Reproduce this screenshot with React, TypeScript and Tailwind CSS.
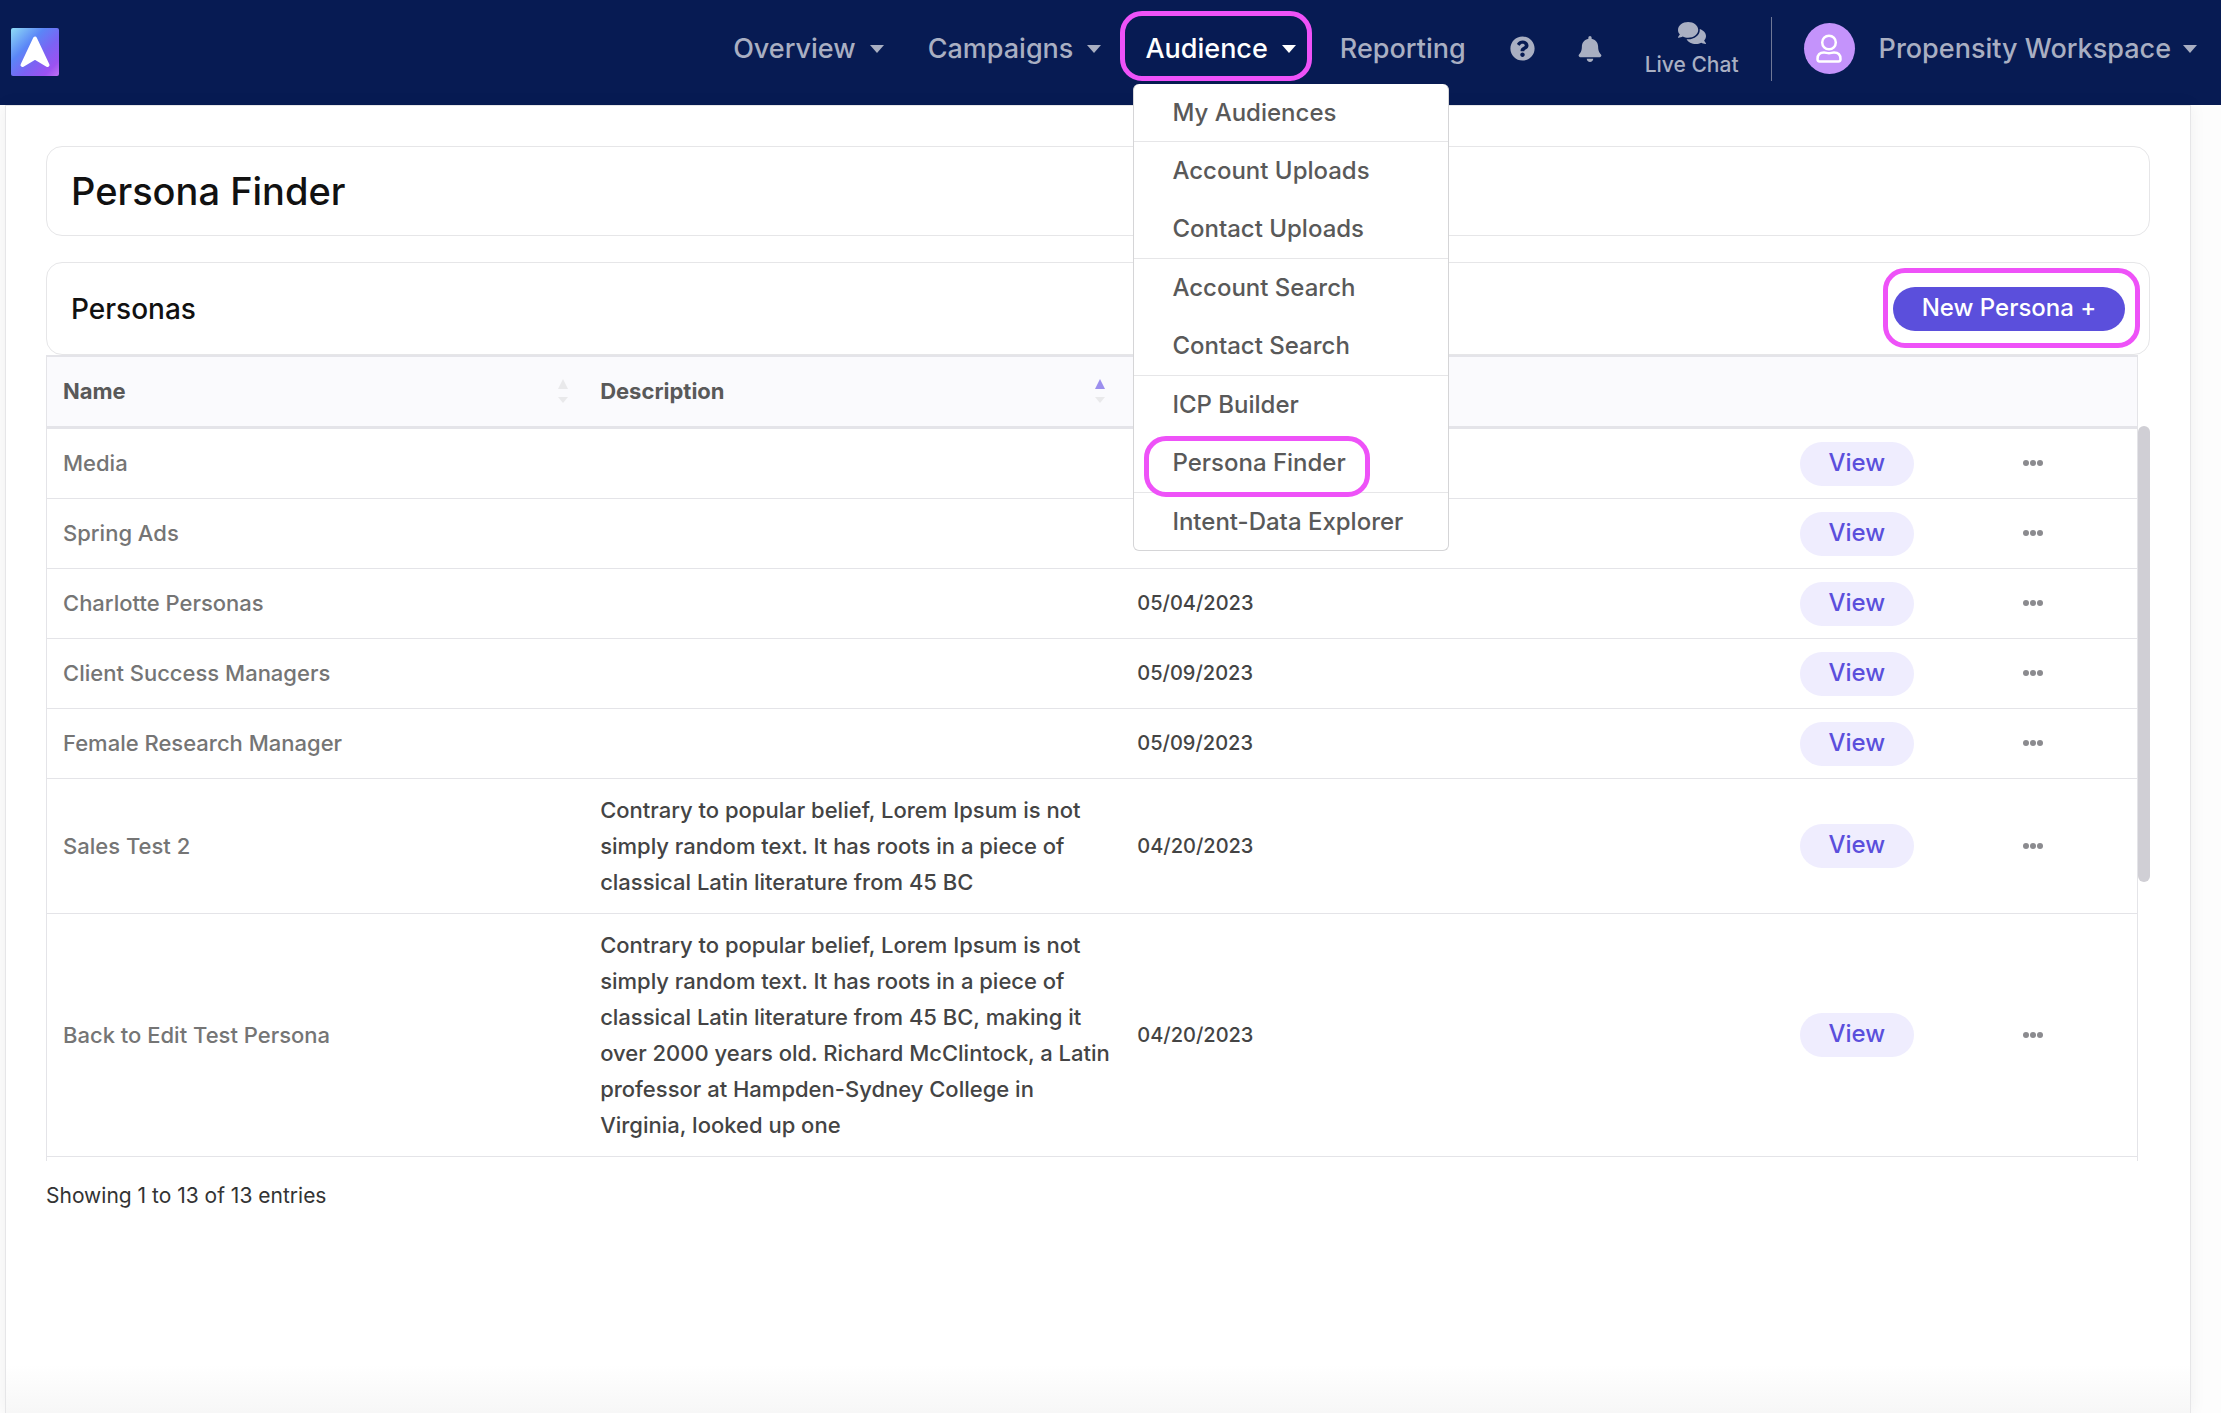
import React from 'react';
import { FaBell, FaComments, FaQuestionCircle } from 'react-icons/fa';

const menuGroups = [
  ['My Audiences'],
  ['Account Uploads', 'Contact Uploads'],
  ['Account Search', 'Contact Search'],
  ['ICP Builder', 'Persona Finder'],
  ['Intent-Data Explorer'],
];

const personas = [
  { name: 'Media', description: '', date: '' },
  { name: 'Spring Ads', description: '', date: '' },
  { name: 'Charlotte Personas', description: '', date: '05/04/2023' },
  { name: 'Client Success Managers', description: '', date: '05/09/2023' },
  { name: 'Female Research Manager', description: '', date: '05/09/2023' },
  {
    name: 'Sales Test 2',
    description:
      'Contrary to popular belief, Lorem Ipsum is not simply random text. It has roots in a piece of classical Latin literature from 45 BC',
    date: '04/20/2023',
  },
  {
    name: 'Back to Edit Test Persona',
    description:
      'Contrary to popular belief, Lorem Ipsum is not simply random text. It has roots in a piece of classical Latin literature from 45 BC, making it over 2000 years old. Richard McClintock, a Latin professor at Hampden-Sydney College in Virginia, looked up one',
    date: '04/20/2023',
  },
];

const Logo = () => (
  <svg width="48" height="48" viewBox="0 0 48 48" aria-hidden="true">
    <defs>
      <linearGradient id="logo" x1="0" y1="0" x2="1" y2="1">
        <stop offset="0" stopColor="#8fdcf5" />
        <stop offset="0.35" stopColor="#5b86f7" />
        <stop offset="0.6" stopColor="#7b63f3" />
        <stop offset="0.84" stopColor="#9c52f2" />
        <stop offset="1" stopColor="#c072f3" />
      </linearGradient>
    </defs>
    <rect width="48" height="48" rx="2" fill="url(#logo)" />
    <path d="M24 10.5 11.5 37 24 29.5 36.500 37Z" fill="#fff" stroke="#fff" strokeWidth="4" strokeLinejoin="round" />
  </svg>
);

const Caret = () => (
  <svg width="14" height="8" viewBox="0 0 14 8" fill="currentColor" aria-hidden="true">
    <path d="M0 0h14L7 8Z" />
  </svg>
);

const SortArrows = ({ active }: { active?: boolean }) => (
  <svg width="10" height="24" viewBox="0 0 10 24" aria-hidden="true">
    <path d="M5 0 10 10H0Z" fill={active ? '#9c8fee' : '#e9e9eb'} />
    <path d="M0 18h10L5 24Z" fill="#e9e9eb" />
  </svg>
);

// Pink outline drawn around the step the user should click
const Highlight = ({ className }: { className: string }) => (
  <span className={`pointer-events-none absolute z-20 rounded-[22px] border-[5px] border-[#ee52f8] ${className}`} />
);

const AudienceMenu = () => (
  <div className="absolute top-[84px] -left-3 z-10 w-[316px] rounded-md border border-t-0 border-[#d5d5d7] bg-white">
    {menuGroups.map((group, i) => (
      <ul key={i} className="border-b border-[#e6e6e8] last:border-b-0">
        {group.map((item) => (
          <li key={item} className={group.length === 1 ? 'h-[57px]' : 'h-[58px]'}>
            <a href="#" className="flex h-full items-center pl-[38px] text-2xl font-medium whitespace-nowrap text-[#595959]">
              <span className="relative">
                {item}
                {item === 'Persona Finder' && <Highlight className="-top-[11px] -right-[24px] -bottom-[18px] -left-[28px]" />}
              </span>
            </a>
          </li>
        ))}
      </ul>
    ))}
  </div>
);

const Header = () => (
  <header className="flex h-[105px] items-center bg-[#071b53] pr-6 pl-[11px] text-[27px] leading-10 font-medium text-[#a9afc2]">
    <a href="#" aria-label="Home" className="pb-0.5"><Logo /></a>
    <nav className="ml-auto flex h-full gap-11">
      <button className="flex items-center gap-3.5 pb-2">Overview <Caret /></button>
      <button className="flex items-center gap-3.5 pb-2">Campaigns <Caret /></button>
      <div className="relative flex items-center pb-2 text-white">
        <button className="relative flex items-center gap-3.5">
          Audience <Caret />
          <Highlight className="-top-[18px] -right-[16px] -bottom-[12px] -left-[25px]" />
        </button>
        <AudienceMenu />
      </div>
      <a href="#" className="flex items-center pb-2">Reporting</a>
    </nav>
    <div className="ml-11 flex items-center pb-2">
      <button aria-label="Help" className="mr-[42px]"><FaQuestionCircle size={25} /></button>
      <button aria-label="Notifications" className="mr-[42px]"><FaBell size={26} /></button>
      <button className="flex flex-col items-center gap-1 text-[21px] leading-7">
        <FaComments size={28} />
        Live Chat
      </button>
      <div className="mx-8 h-16 w-px bg-[#6f7896]" />
      <button className="flex items-center">
        <span className="mr-6 flex size-[51px] items-center justify-center rounded-full bg-[#c493fb]">
          <svg width="26" height="29" viewBox="0 0 26 29" fill="none" stroke="#fff" strokeWidth="2.500" aria-hidden="true">
            <circle cx="13" cy="8.500" r="6.800" />
            <path
              d="M8 18.500c2 0 3 .8 5 .8s3-.8 5-.8c4.500 0 6.500 2.800 6.500 6.500 0 1.500-.8 2.500-2 2.500h-19c-1.200 0-2-1-2-2.500 0-3.700 2-6.500 6.500-6.500Z"
              strokeLinejoin="round"
            />
          </svg>
        </span>
        <span className="mr-3">Propensity Workspace</span>
        <Caret />
      </button>
    </div>
  </header>
);

const PersonaTable = () => (
  <div className="flex">
    <div className="min-w-0 flex-1 border-x border-[#e4e4e8] pb-1">
      <table className="w-full table-fixed border-collapse text-left text-[22px] leading-9 font-medium text-[#444]">
        <thead className="border-t-2 border-b-[3px] border-[#e4e4e9] bg-[#fafafd] font-bold text-[#595959]">
          <tr className="h-[71px]">
            <th className="w-[25.7%] px-4">
              <span className="flex items-center justify-between">Name <SortArrows /></span>
            </th>
            <th className="w-[25.7%] px-4">
              <span className="flex items-center justify-between">Description <SortArrows active /></span>
            </th>
            <th className="w-[31.7%] px-4" />
            <th className="w-[10.7%] px-4" />
            <th className="px-4" />
          </tr>
        </thead>
        <tbody>
          {personas.map((p) => (
            <tr key={p.name} className="border-b border-[#e4e4e8]">
              <td className="px-4 text-[#757575]">{p.name}</td>
              <td className="py-[13px] pr-2 pl-4">{p.description}</td>
              <td className="px-4 text-xl">{p.date}</td>
              <td className="px-4 pt-[13px] pb-3">
                <button className="block h-11 w-[114px] rounded-full bg-[#efedfe] pb-0.5 text-2xl text-[#5b4fdc]">View</button>
              </td>
              <td className="px-4">
                <button aria-label="More actions" className="block">
                  <svg width="20" height="6" viewBox="0 0 20 6" fill="#8b8b8f">
                    <circle cx="3" cy="3" r="3" />
                    <circle cx="10" cy="3" r="3" />
                    <circle cx="17" cy="3" r="3" />
                  </svg>
                </button>
              </td>
            </tr>
          ))}
        </tbody>
      </table>
    </div>
    <div className="w-3 pt-[71px]">
      <div className="h-[456px] rounded-full bg-[#d0cfd5]" />
    </div>
  </div>
);

export default function App() {
  return (
    <div className="flex min-h-screen flex-col bg-[#fdfdfd] font-['Inter',sans-serif]">
      <Header />
      <main className="mr-[30px] ml-[5px] flex flex-1 flex-col border border-b-0 border-[#e6e6e8] bg-white shadow-[0_0_16px_rgba(0,0,0,0.06)]">
        <div className="flex-1 px-10 pt-10">
          <div className="mb-[26px] flex h-[90px] items-center rounded-2xl border border-[#e6e6e8] px-6">
            <h1 className="text-[38px] font-medium text-[#111]">Persona Finder</h1>
          </div>
          <section>
            <div className="flex h-[93px] items-center justify-between rounded-2xl border border-[#e6e6e8] px-6">
              <h2 className="text-[28px] font-medium text-[#111]">Personas</h2>
              <button className="relative h-11 w-[232px] rounded-full bg-[#5b4fdc] pb-0.5 text-2xl font-medium text-white">
                New Persona +
                <Highlight className="-top-[19px] -right-[15px] -bottom-[17px] -left-[10px]" />
              </button>
            </div>
            <PersonaTable />
          </section>
          <p className="mt-[17px] text-[21px] leading-9 text-[#333]">Showing 1 to 13 of 13 entries</p>
        </div>
        <div className="h-12 bg-linear-to-b from-white to-[#f7f7f7]" />
      </main>
    </div>
  );
}
